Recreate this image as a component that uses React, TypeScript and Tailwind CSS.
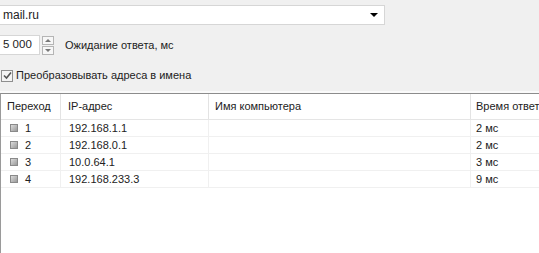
const rows = [
  { hop: '1', ip: '192.168.1.1', time: '2 мс' },
  { hop: '2', ip: '192.168.0.1', time: '2 мс' },
  { hop: '3', ip: '10.0.64.1', time: '3 мс' },
  { hop: '4', ip: '192.168.233.3', time: '9 мс' },
];

function HopIcon() {
  return (
    <span className="inline-block w-[8px] h-[8px] border border-[#8a8a8a] bg-gradient-to-br from-[#dcdcdc] to-[#9a9a9a] mr-[7px]" />
  );
}

export default function App() {
  return (
    <div className="w-[539px] h-[253px] overflow-hidden bg-[#f0f0f0] text-[11px] text-[#222] flex flex-col" style={{ fontFamily: '"Liberation Sans", Arial, sans-serif' }}>
      {/* host combo */}
      <div className="pt-[5px] pr-[154px]">
        <div className="h-[20px] bg-white border border-[#d6d6d6] border-l-0 flex items-center pl-[3px] pr-[6px]">
          <span className="flex-1 text-[12px]">mail.ru</span>
          <span className="w-0 h-0 border-l-[4px] border-r-[4px] border-t-[4px] border-l-transparent border-r-transparent border-t-black" />
        </div>
      </div>

      {/* timeout */}
      <div className="mt-[10px] flex items-center h-[20px]">
        <div className="w-[40px] h-[20px] bg-white border border-[#d6d6d6] border-l-0 flex items-center pl-[3px] text-[11.5px]">5 000</div>
        <div className="ml-[2px] flex flex-col gap-[1px]">
          <div className="w-[12px] h-[9px] border border-[#b5b5b5] bg-[#f7f7f7] flex items-center justify-center">
            <span className="w-0 h-0 border-l-[3px] border-r-[3px] border-b-[3px] border-l-transparent border-r-transparent border-b-[#777]" />
          </div>
          <div className="w-[12px] h-[9px] border border-[#b5b5b5] bg-[#f7f7f7] flex items-center justify-center">
            <span className="w-0 h-0 border-l-[3px] border-r-[3px] border-t-[3px] border-l-transparent border-r-transparent border-t-[#777]" />
          </div>
        </div>
        <span className="ml-[11px]">Ожидание ответа, мс</span>
      </div>

      {/* resolve checkbox */}
      <div className="mt-[14px] flex items-center h-[13px]">
        <div className="ml-[1px] w-[12px] h-[12px] border border-[#8f8f8f] bg-[#f4f4f4] flex items-center justify-center">
          <svg width="9" height="9" viewBox="0 0 9 9">
            <path d="M1 4.5 L3.5 7 L8 1.5" fill="none" stroke="#555" strokeWidth="1.6" />
          </svg>
        </div>
        <span className="ml-[3px]">Преобразовывать адреса в имена</span>
      </div>

      {/* trace list */}
      <div className="mt-[11px] flex-1 bg-white border-t border-t-[#8c8c8c] border-l border-l-[#9a9a9a] shadow-[0_-2px_0_#fafafa] w-[600px]">
        <div className="flex h-[26px] items-center border-b border-[#e5e5e5]">
          <div className="w-[60px] pl-[6px] border-r border-[#e3e3e3] h-full flex items-center">Переход</div>
          <div className="w-[148px] pl-[7px] border-r border-[#e3e3e3] h-full flex items-center">IP-адрес</div>
          <div className="w-[262px] pl-[6px] border-r border-[#e3e3e3] h-full flex items-center">Имя компьютера</div>
          <div className="flex-1 pl-[5px] h-full flex items-center">Время ответа</div>
        </div>
        {rows.map(r => (
          <div key={r.hop} className="flex h-[17px] items-center border-b border-[#f0f0f0]">
            <div className="w-[60px] pl-[9px] border-r border-[#f0f0f0] h-full flex items-center">
              <HopIcon />{r.hop}
            </div>
            <div className="w-[148px] pl-[8px] border-r border-[#f0f0f0] h-full flex items-center">{r.ip}</div>
            <div className="w-[262px] border-r border-[#f0f0f0] h-full" />
            <div className="flex-1 pl-[5px] h-full flex items-center">{r.time}</div>
          </div>
        ))}
      </div>
    </div>
  );
}
